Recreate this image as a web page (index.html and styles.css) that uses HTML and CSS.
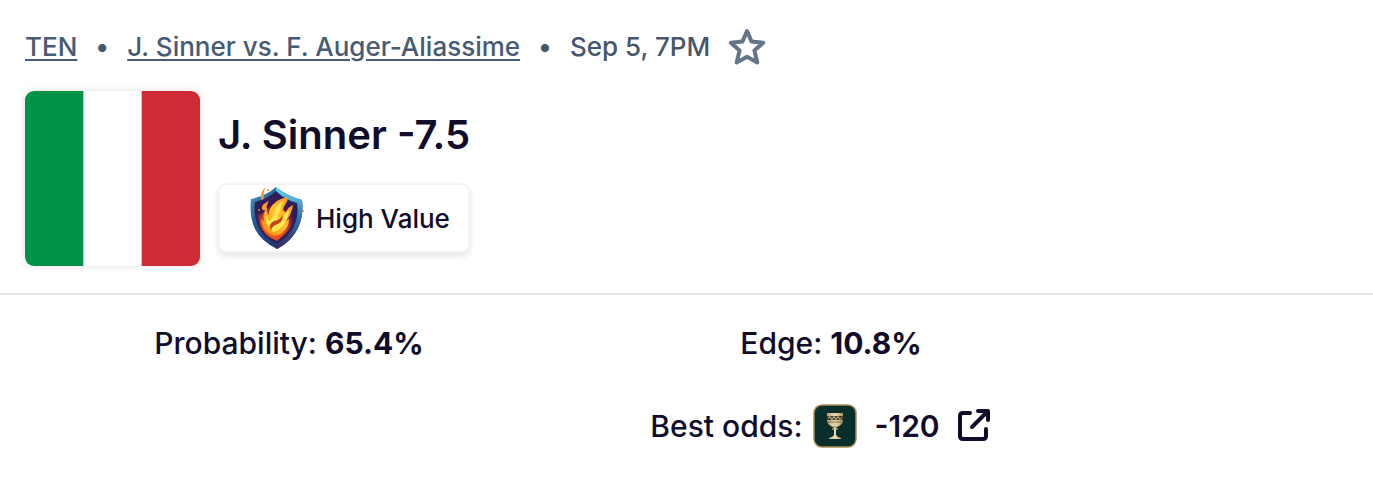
FILE: index.html
```html
<!DOCTYPE html>
<html lang="en">
<head>
    <meta charset="UTF-8">
    <meta name="viewport" content="width=device-width, initial-scale=1.0">
    <title>J. Sinner -7.5</title>
    <link rel="stylesheet" href="styles.css">
</head>
<body>
    <header class="bet-header">
        <div class="event">
            <a href="#">TEN</a>
            <span class="dot">•</span>
            <a href="#">J. Sinner vs. F. Auger-Aliassime</a>
            <span class="dot">•</span>
            <span>Sep 5, 7PM</span>
            <button class="star" type="button" aria-label="Save bet">
                <svg width="38" height="38" viewBox="0 0 38 38" fill="none" stroke="#64748b" stroke-width="4" stroke-linejoin="round">
                    <path d="M19 3l4.6 10.6 11.6 1.1-8.8 7.7 2.9 12.1L19 28.8 8.7 34.5l2.9-12.1-8.8-7.7 11.6-1.1z"/>
                </svg>
            </button>
        </div>

        <div class="pick">
            <svg class="flag" viewBox="0 0 3 3" role="img" aria-label="Italy">
                <rect width="3" height="3" fill="#fff"/>
                <rect width="1" height="3" fill="#009246"/>
                <rect x="2" width="1" height="3" fill="#ce2b37"/>
            </svg>
            <div class="pick-info">
                <h1>J. Sinner -7.5</h1>
                <div class="badge">
                    <svg width="60" height="66" viewBox="0 0 60 66" aria-hidden="true">
                        <defs>
                            <linearGradient id="rim" x1="0" y1="0" x2="1" y2="1">
                                <stop offset="0" stop-color="#4c9fcb"/>
                                <stop offset=".35" stop-color="#25548f"/>
                                <stop offset="1" stop-color="#252259"/>
                            </linearGradient>
                            <linearGradient id="rimLight" x1="0" y1="0" x2="0" y2="1">
                                <stop offset="0" stop-color="#69d5ef"/>
                                <stop offset=".5" stop-color="#2e73b5"/>
                                <stop offset="1" stop-color="#38245e"/>
                            </linearGradient>
                            <radialGradient id="field" cx=".45" cy=".65" r=".6">
                                <stop offset="0" stop-color="#ff8a12"/>
                                <stop offset=".55" stop-color="#e8431b"/>
                                <stop offset=".85" stop-color="#761c4b"/>
                                <stop offset="1" stop-color="#371a57"/>
                            </radialGradient>
                            <linearGradient id="fire" x1="1" y1="0" x2="0" y2="1">
                                <stop offset="0" stop-color="#ff8b18"/>
                                <stop offset=".5" stop-color="#ffc42c"/>
                                <stop offset="1" stop-color="#ff8215"/>
                            </linearGradient>
                        </defs>
                        <!-- shield -->
                        <path d="M30 2Q20 11 5 14Q3 31 9 44Q15 56 31 64Q46 56 52 43Q58 30 56 15Q41 11 30 2Z" fill="url(#rim)"/>
                        <path d="M30 2Q41 11 56 15Q58 30 52 43Q46 56 31 64V58Q43 51 48 40Q52 30 51 19Q38 15 30 7Z" fill="url(#rimLight)"/>
                        <path d="M30 6Q21 14 9 17Q7 31 13 43Q18 53 31 59Q43 52 48 41Q53 30 51 18Q39 15 30 6Z" fill="#27245b"/>
                        <path d="M30 9Q21 16 11 19Q10 31 15 42Q20 51 31 56Q41 50 46 40Q50 30 49 20Q38 17 30 9Z" fill="#351a54"/>
                        <path d="M11 28Q14 31 19 26Q27 17 36 16Q47 18 48 28Q48 41 39 49L31 56Q18 51 14 40Z" fill="url(#field)"/>
                        <!-- flames -->
                        <path d="M42 12Q29 14 24 24Q22 28 24 31Q20 28 21 23Q15 31 19 37L15 34Q16 44 24 49Q31 53 37 47Q43 42 43 34L39 37Q46 29 47 20Q42 22 40 27Q35 26 39 20Q42 16 42 12Z" fill="url(#fire)"/>
                        <path d="M38 15Q28 21 29 29Q26 32 24 36Q21 34 21 30Q18 37 23 41Q27 36 32 35Q30 31 34 27Q35 20 38 15ZM43 25Q38 29 37 34Q34 39 27 40Q24 43 27 47Q33 46 36 41Q42 35 43 25Z" fill="#ffe851"/>
                        <path d="M36 30Q35 35 28 36Q22 39 25 45Q27 40 32 39Q38 36 36 30Z" fill="#c9421a"/>
                        <path d="M16 24Q15 19 23 16Q20 21 21 24Q19 27 16 24ZM15 14Q14 6 20 2Q17 7 18 9Q18 12 17 15Z" fill="#f99a32"/>
                        <circle cx="13" cy="25" r="1" fill="#ff761b"/>
                        <circle cx="22" cy="5" r="1" fill="#ef7b2b"/>
                        <circle cx="57" cy="26" r="1" fill="#ef7b2b"/>
                    </svg>
                    <span>High Value</span>
                </div>
            </div>
        </div>
    </header>

    <section class="stats">
        <div class="stat">Probability: <strong>65.4%</strong></div>
        <div class="stat">Edge: <strong>10.8%</strong></div>
        <div class="stat odds">
            <span>Best odds:</span>
            <svg class="book" width="44" height="44" viewBox="0 0 44 44" role="img" aria-label="Sportsbook">
                <defs>
                    <linearGradient id="gold">
                        <stop offset="0" stop-color="#b49a6b"/>
                        <stop offset=".5" stop-color="#f1dfb5"/>
                        <stop offset="1" stop-color="#a98e61"/>
                    </linearGradient>
                </defs>
                <rect x="1" y="1" width="42" height="42" rx="8" fill="#092f2d" stroke="#a98e50" stroke-width="1.5"/>
                <path d="M14 9h16v7q0 5-6 7l-1 2v6q1 2 5 3v1H16v-1q4-1 5-3v-6l-1-2q-6-2-6-7z" fill="url(#gold)"/>
                <path d="M14 12h16v4H14z" fill="#453f2e"/>
                <path d="M15 14l2-1.5 2 3 2-3 2 3 2-3 2 3 2-2M17 19q5 3 10 0M19 25h6" fill="none" stroke="#d9c48f"/>
                <path d="M15 18h14M20 23h4" stroke="#86744d"/>
            </svg>
            <strong class="price">-120</strong>
            <a class="open" href="#" aria-label="Open sportsbook">
                <svg width="32" height="36" viewBox="0 0 32 36" fill="none" stroke="#100c2a" stroke-width="4" stroke-linecap="round" stroke-linejoin="round">
                    <path d="M12 5H5q-3 0-3 3v20q0 3 3 3h20q3 0 3-3v-7"/>
                    <path d="M14 19L28 5M20 3h10v9"/>
                </svg>
            </a>
        </div>
    </section>
</body>
</html>
```

FILE: styles.css
```css
/* General */
* { box-sizing: border-box; }
body { margin: 0; background: #fff; color: #100c2a; font-family: Inter, "Liberation Sans", sans-serif; }
svg { display: block; flex-shrink: 0; }

/* Bet header */
.bet-header { padding: 27px 25px; border-bottom: 2px solid #e5e7eb; }
.event { display: flex; align-items: center; gap: 18px; height: 40px; font-size: 26px; line-height: 40px; font-weight: 500; color: #475569; white-space: nowrap; }
.event a { color: #475b74; text-decoration: underline; text-decoration-thickness: 2px; text-underline-offset: 3px; }
.star { padding: 0; border: 0; background: none; cursor: pointer; }

/* Pick */
.pick { display: flex; gap: 18px; margin-top: 24px; }
.flag { width: 175px; height: 175px; border-radius: 9px; box-shadow: 0 0 8px rgba(0, 0, 0, 0.12); }
.pick-info { padding-top: 16px; }
.pick-info h1 { margin: 0 0 20px; font-size: 40px; line-height: 56px; font-weight: 600; }
.badge { display: inline-flex; align-items: center; gap: 10px; padding: 0 18px 0 26px; border: 2px solid #f3f4f6; border-radius: 9px; box-shadow: 0 3px 6px rgba(15, 23, 42, 0.12); font-size: 26px; font-weight: 500; }

/* Stats */
.stats { display: grid; grid-template-columns: 2fr 2fr 1fr; row-gap: 39px; padding: 26px 0 26px 18px; font-size: 30px; line-height: 44px; font-weight: 500; }
.stat { text-align: center; white-space: nowrap; }
.stat strong { font-weight: 700; }
.odds { grid-column: 2; display: flex; align-items: center; justify-content: center; gap: 10px; padding-right: 22px; }
.stat .price { margin: 0 8px; font-weight: 600; }
.open { color: inherit; }
```
